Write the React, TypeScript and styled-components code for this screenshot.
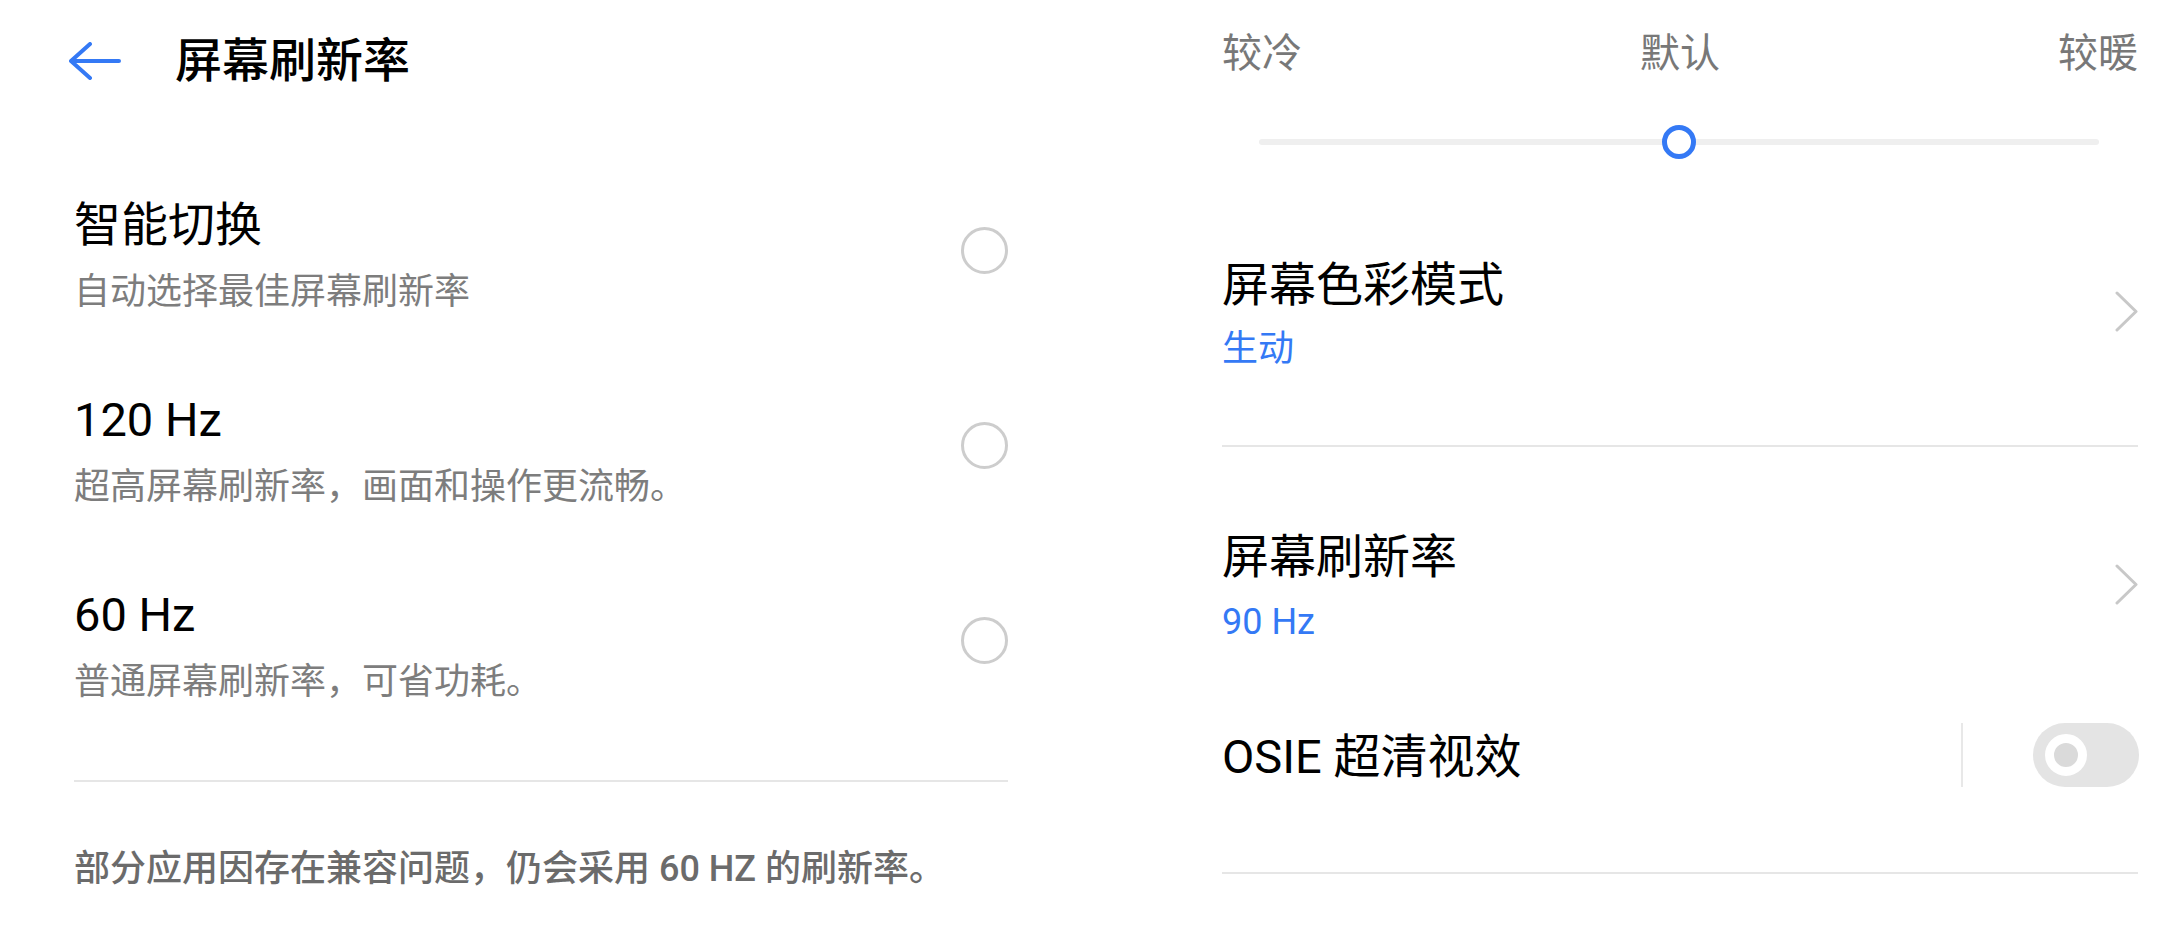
import React from 'react';
import styled, { createGlobalStyle } from 'styled-components';

const GlobalStyle = createGlobalStyle`
  html, body {
    margin: 0;
    padding: 0;
    background: #ffffff;
  }
  body {
    font-family: Roboto, 'Noto Sans CJK SC', sans-serif;
    color: #000;
  }
`;

const BLUE = '#3479f5';

const Page = styled.div`
  display: flex;
  width: 2175px;
  height: 937px;
  box-sizing: border-box;
  padding-left: 74px;
  gap: 214px;
  overflow: hidden;
`;

const LeftPanel = styled.section`
  width: 934px;
  display: flex;
  flex-direction: column;
`;

const Header = styled.header`
  height: 122px;
  display: flex;
  align-items: center;
  margin-left: -5px;
  gap: 54px;
`;

const BackArrow = styled.svg`
  width: 52px;
  height: 38px;
  flex-shrink: 0;
`;

const PageTitle = styled.h1`
  margin: 0;
  font-size: 47px;
  font-weight: 500;
  line-height: 60px;
`;

const OptionList = styled.div`
  margin-top: 71px;
  display: flex;
  flex-direction: column;
  gap: 61px;
`;

const OptionRow = styled.div`
  display: flex;
  align-items: center;
  justify-content: space-between;
  height: 134px;
`;

const TextBlock = styled.div`
  display: flex;
  flex-direction: column;
`;

const ItemTitle = styled.div<{ $lh?: number }>`
  font-size: 47px;
  line-height: ${({ $lh }) => $lh ?? 64}px;
  font-weight: 400;
  color: #000;
  white-space: nowrap;
`;

const ItemSub = styled.div<{ $accent?: boolean; $lh?: number }>`
  font-size: 36px;
  line-height: ${({ $lh }) => $lh ?? 70}px;
  color: ${({ $accent }) => ($accent ? BLUE : '#7d7d7d')};
  white-space: nowrap;
`;

const Radio = styled.div`
  width: 47px;
  height: 47px;
  box-sizing: border-box;
  border-radius: 50%;
  border: 3.5px solid #cdcdcd;
  margin-bottom: 20px;
  flex-shrink: 0;
`;

const Divider = styled.div<{ $top: number }>`
  height: 2px;
  background: #e6e6e6;
  margin-top: ${({ $top }) => $top}px;
`;

const Footnote = styled.p`
  margin: 62px 0 0;
  font-size: 36px;
  line-height: 50px;
  font-weight: 500;
  color: #6b6b6b;
  white-space: nowrap;
`;

const RightPanel = styled.section`
  width: 916px;
  display: flex;
  flex-direction: column;
`;

const TempLabels = styled.div`
  margin-top: 24px;
  display: flex;
  justify-content: space-between;
  font-size: 40px;
  line-height: 60px;
  color: #787878;
`;

const SliderArea = styled.div`
  margin: 38px 39px 0 37px;
  height: 40px;
  position: relative;
  display: flex;
  align-items: center;
`;

const Track = styled.div`
  width: 100%;
  height: 6px;
  border-radius: 3px;
  background: #efefef;
`;

const Thumb = styled.div`
  position: absolute;
  top: 50%;
  width: 34px;
  height: 34px;
  box-sizing: border-box;
  border-radius: 50%;
  border: 5px solid ${BLUE};
  background: #fff;
  transform: translate(-50%, -50%);
`;

const NavRow = styled.div<{ $top: number }>`
  margin-top: ${({ $top }) => $top}px;
  display: flex;
  align-items: center;
  justify-content: space-between;
`;

const Chevron = styled.svg`
  width: 25px;
  height: 41px;
  margin-right: -1px;
  margin-top: -16px;
  flex-shrink: 0;
`;

const SwitchRow = styled.div`
  margin-top: 66px;
  height: 64px;
  display: flex;
  align-items: center;
`;

const SwitchLabel = styled.div`
  flex: 1;
  font-size: 47px;
  line-height: 64px;
  color: #000;
  margin-top: 4px;
`;

const VSep = styled.div`
  width: 2px;
  height: 64px;
  background: #e8e8e8;
  margin-right: 70px;
`;

const Toggle = styled.div`
  width: 106px;
  height: 64px;
  border-radius: 32px;
  background: #e4e4e4;
  display: flex;
  align-items: center;
  padding-left: 12px;
  box-sizing: border-box;
  margin-right: -1px;
`;

const Knob = styled.div`
  width: 42px;
  height: 42px;
  box-sizing: border-box;
  border-radius: 50%;
  border: 9px solid #ffffff;
  background: #dadada;
`;

const options = [
  { title: '智能切换', sub: '自动选择最佳屏幕刷新率' },
  { title: '120 Hz', sub: '超高屏幕刷新率，画面和操作更流畅。' },
  { title: '60 Hz', sub: '普通屏幕刷新率，可省功耗。' },
];

const ChevronIcon = () => (
  <Chevron viewBox="0 0 25 41">
    <path d="M3 2 L22 20.5 L3 39" fill="none" stroke="#c8c8c8" strokeWidth="3" strokeLinecap="round" strokeLinejoin="round" />
  </Chevron>
);

export default function App() {
  return (
    <>
      <GlobalStyle />
      <Page>
        <LeftPanel>
          <Header>
            <BackArrow viewBox="0 0 52 38">
              <path
                d="M2 19 H50 M21 2 L2 19 L21 36"
                fill="none"
                stroke={BLUE}
                strokeWidth="4"
                strokeLinecap="round"
                strokeLinejoin="round"
              />
            </BackArrow>
            <PageTitle>屏幕刷新率</PageTitle>
          </Header>
          <OptionList>
            {options.map((o) => (
              <OptionRow key={o.title}>
                <TextBlock>
                  <ItemTitle>{o.title}</ItemTitle>
                  <ItemSub>{o.sub}</ItemSub>
                </TextBlock>
                <Radio />
              </OptionRow>
            ))}
          </OptionList>
          <Divider $top={63} />
          <Footnote>部分应用因存在兼容问题，仍会采用 60 HZ 的刷新率。</Footnote>
        </LeftPanel>

        <RightPanel>
          <TempLabels>
            <span>较冷</span>
            <span>默认</span>
            <span>较暖</span>
          </TempLabels>
          <SliderArea>
            <Track />
            <Thumb style={{ left: '50%' }} />
          </SliderArea>
          <NavRow $top={93}>
            <TextBlock>
              <ItemTitle $lh={60}>屏幕色彩模式</ItemTitle>
              <ItemSub $accent $lh={68}>生动</ItemSub>
            </TextBlock>
            <ChevronIcon />
          </NavRow>
          <Divider $top={62} />
          <NavRow $top={80}>
            <TextBlock>
              <ItemTitle $lh={60}>屏幕刷新率</ItemTitle>
              <ItemSub $accent $lh={70}>90 Hz</ItemSub>
            </TextBlock>
            <ChevronIcon />
          </NavRow>
          <SwitchRow>
            <SwitchLabel>OSIE 超清视效</SwitchLabel>
            <VSep />
            <Toggle>
              <Knob />
            </Toggle>
          </SwitchRow>
          <Divider $top={85} />
        </RightPanel>
      </Page>
    </>
  );
}
